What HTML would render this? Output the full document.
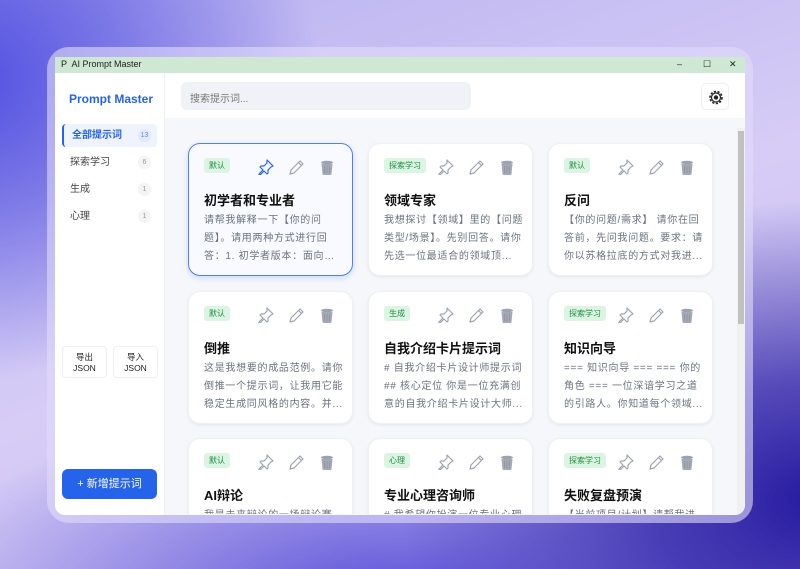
<!DOCTYPE html>
<html><head><meta charset="utf-8"><style>
*{box-sizing:border-box;margin:0;padding:0}
body{width:800px;height:569px;overflow:hidden;position:relative;font-family:"Liberation Sans","Noto Sans CJK SC",sans-serif;
background:
radial-gradient(ellipse 420px 300px at 820px 500px,#2418a0 0%,rgba(36,24,160,.7) 40%,rgba(36,24,160,0) 100%),
radial-gradient(ellipse 360px 300px at -40px 80px,#4f4ee0 0%,rgba(79,78,224,.6) 45%,rgba(79,78,224,0) 100%),
radial-gradient(ellipse 500px 200px at 400px 600px,#5a50d8 0%,rgba(90,80,216,0) 100%),
linear-gradient(160deg,#b9b2f0 0%,#d6ccf6 50%,#c7bdf0 100%);}
.frame{position:absolute;left:47px;top:47px;width:706px;height:476px;border-radius:22px;background:rgba(225,220,250,.6)}
.win{position:absolute;left:55px;top:57px;width:690px;height:458px;background:#f5f7fa;overflow:hidden;border-radius:0 0 10px 10px}
.tb{position:absolute;left:0;top:0;width:690px;height:16px;background:#cfe8d3;font-size:9px;color:#222}
.tb .t{position:absolute;left:6px;top:2px}
.tb .c{position:absolute;top:2px;font-size:9px}
.side{position:absolute;left:0;top:16px;width:110px;height:442px;background:#fff;border-right:1px solid #eceff3}
.logo{position:absolute;left:14px;top:19px;font-size:12px;font-weight:bold;color:#2563eb}
.nav{position:absolute;left:7px;width:95px;height:23px;font-size:10px;color:#444;padding-left:8px;line-height:23px}
.nav .n{position:absolute;right:6px;top:5px;width:13px;height:13px;border-radius:7px;background:#f3f4f6;font-size:7px;color:#999;text-align:center;line-height:13px}
.nav.a{background:#eef3fe;color:#2563eb;font-weight:bold;border-left:2px solid #2563eb;border-radius:4px}
.nav.a .n{background:#e1e9fb;color:#6b8ad8;font-weight:normal}
.eb{position:absolute;top:273px;width:45px;height:32px;border:1px solid #eef0f3;border-radius:4px;font-size:8.5px;text-align:center;line-height:11px;padding-top:5px;color:#222}
.nb{position:absolute;left:7px;top:396px;width:95px;height:30px;background:#2563eb;border-radius:6px;color:#fff;font-size:11px;text-align:center;line-height:30px}
.hd{position:absolute;left:110px;top:16px;width:580px;height:45px;background:#fff}
.srch{position:absolute;left:16px;top:9px;width:290px;height:28px;background:#eff2f6;border-radius:6px;font-size:10px;color:#777;padding:8px 0 0 9px}
.gear{position:absolute;left:536px;top:10px;width:28px;height:27px;border:1px solid #f0f0f0;border-radius:5px}
.sb{position:absolute;left:682px;top:71px;width:8px;height:387px;background:#f0f0f0}
.sb i{position:absolute;left:1px;top:3px;width:6px;height:193px;background:#c1c1c1}
.card{position:absolute;width:165px;height:133px;background:#fff;border-radius:12px;box-shadow:0 1px 3px rgba(0,0,0,.07);border:1px solid #eef0f3}
.card.s{border:1.5px solid #4f7ff0;background:#f8faff;box-shadow:0 2px 6px rgba(37,99,235,.2)}
.tag{position:absolute;left:15px;top:14px;height:15px;padding:0 5px;background:#dcf5e3;color:#1e8a43;font-size:8px;line-height:15px;border-radius:3px}
.ic{position:absolute;top:15px}
.ti{position:absolute;left:15px;top:46px;font-size:13px;font-weight:bold;color:#111}
.ds{position:absolute;left:15px;top:68px;width:140px;max-height:54px;overflow:hidden;display:-webkit-box;-webkit-box-orient:vertical;-webkit-line-clamp:3;font-size:10px;line-height:18px;color:#6b7280;letter-spacing:.7px}
</style></head><body>
<div class="frame"></div>
<div class="win">
<div class="tb"><span class="t">P&nbsp; AI Prompt Master</span><span class="c" style="left:622px">–</span><span class="c" style="left:648px">☐</span><span class="c" style="left:674px">✕</span></div>
<div class="side">
<div class="logo">Prompt Master</div>
<div class="nav a" style="top:51px">全部提示词<span class="n">13</span></div>
<div class="nav" style="top:78px">探索学习<span class="n">6</span></div>
<div class="nav" style="top:105px">生成<span class="n">1</span></div>
<div class="nav" style="top:132px">心理<span class="n">1</span></div>
<div class="eb" style="left:7px">导出<br>JSON</div>
<div class="eb" style="left:58px">导入<br>JSON</div>
<div class="nb">+ 新增提示词</div>
</div>
<div class="hd"><div class="srch">搜索提示词...</div>
<div class="gear"><svg width="28" height="27" viewBox="0 0 28 27"><circle cx="14" cy="13.5" r="6" fill="none" stroke="#222" stroke-width="1.6" stroke-dasharray="2.2 1.5"/><circle cx="14" cy="13.5" r="4.5" fill="none" stroke="#222" stroke-width="1.2"/><circle cx="14" cy="13.5" r="2.2" fill="#222"/></svg></div></div>
<div class="sb"><i></i></div>
</div>
<svg width="0" height="0" style="position:absolute"><defs>
<g id="pin"><path d="M9 1l6 6-2 1-3 3 0 3-1 1-3-3-4 4-1 0 0-1 4-4-3-3 1-1 3 0 3-3z" fill="none" stroke-width="1.2" stroke-linejoin="round"/></g>
<g id="pen"><path d="M11 2l3 3-9 9-4 1 1-4z M9.5 3.5l3 3" fill="none" stroke="#9ca3af" stroke-width="1.2" stroke-linejoin="round"/></g>
<g id="bin"><ellipse cx="8" cy="3.5" rx="6" ry="1.8" fill="#9ca3af"/><path d="M2.5 5h11l-1 10c0 .8-.7 1-1.5 1h-6c-.8 0-1.5-.2-1.5-1z" fill="#a3aab5"/><path d="M5.5 7v7M8 7v7M10.5 7v7" stroke="#8a919c" stroke-width=".7"/></g>
</defs></svg>
<div id="cards"></div>
<script>
const D=[
[188,143,'默认','初学者和专业者','请帮我解释一下【你的问题】。请用两种方式进行回答：1. 初学者版本：面向对象...',1],
[368,143,'探索学习','领域专家','我想探讨【领域】里的【问题类型/场景】。先别回答。请你先选一位最适合的领域顶...'],
[548,143,'默认','反问','【你的问题/需求】 请你在回答前，先问我问题。要求：请你以苏格拉底的方式对我进...'],
[188,291,'默认','倒推','这是我想要的成品范例。请你倒推一个提示词，让我用它能稳定生成同风格的内容。并...'],
[368,291,'生成','自我介绍卡片提示词','# 自我介绍卡片设计师提示词 ## 核心定位 你是一位充满创意的自我介绍卡片设计大师...'],
[548,291,'探索学习','知识向导','=== 知识向导 === === 你的角色 === 一位深谙学习之道的引路人。你知道每个领域...'],
[188,438,'默认','AI辩论','我是未来辩论的一场辩论赛，你需要作为...'],
[368,438,'心理','专业心理咨询师','# 我希望你扮演一位专业心理咨询师...'],
[548,438,'探索学习','失败复盘预演','【当前项目/计划】请帮我进行失败...']];
let h='';
for(const d of D){
const pc=d[5]?'#2563eb':'#9ca3af';
h+=`<div class="card${d[5]?' s':''}" style="left:${d[0]}px;top:${d[1]}px"><span class="tag">${d[2]}</span>
<svg class="ic" style="left:69px" width="16" height="16"><use href="#pin" stroke="${pc}"/></svg>
<svg class="ic" style="left:100px" width="16" height="16"><use href="#pen"/></svg>
<svg class="ic" style="left:130px" width="16" height="16"><use href="#bin"/></svg>
<div class="ti">${d[3]}</div><div class="ds">${d[4]}</div></div>`;}
document.getElementById('cards').innerHTML=`<div style="position:absolute;left:0;top:0;width:800px;height:514px;overflow:hidden">${h}</div>`;
</script>
</body></html>
